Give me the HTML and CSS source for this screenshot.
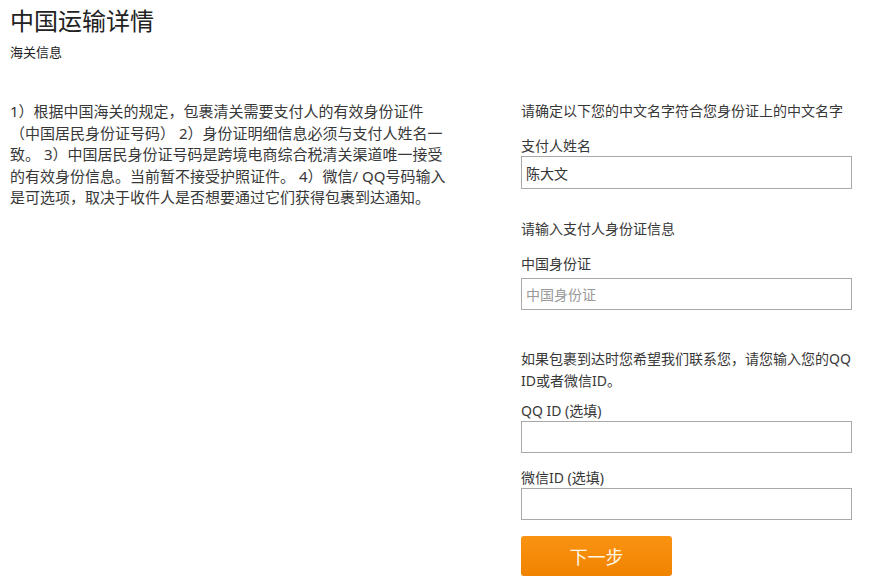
FILE: index.html
```html
<!DOCTYPE html>
<html lang="zh-CN">
<head>
<meta charset="utf-8">
<title>中国运输详情</title>
<link rel="stylesheet" href="styles.css">
</head>
<body>
<div class="page">
  <h1 class="title">中国运输详情</h1>
  <div class="subtitle">海关信息</div>
  <div class="main">
    <div class="left">
      <p class="info">1）根据中国海关的规定，包裹清关需要支付人的有效身份证件（中国居民身份证号码） 2）身份证明细信息必须与支付人姓名一致。 3）中国居民身份证号码是跨境电商综合税清关渠道唯一接受的有效身份信息。当前暂不接受护照证件。 4）微信/ QQ号码输入是可选项，取决于收件人是否想要通过它们获得包裹到达通知。</p>
    </div>
    <div class="right">
      <div class="note n1">请确定以下您的中文名字符合您身份证上的中文名字</div>
      <div class="label l1">支付人姓名</div>
      <input class="field f1" type="text" value="陈大文">
      <div class="note n2">请输入支付人身份证信息</div>
      <div class="label l2">中国身份证</div>
      <input class="field f2" type="text" placeholder="中国身份证">
      <div class="note n3">如果包裹到达时您希望我们联系您，请您输入您的QQ ID或者微信ID。</div>
      <div class="label l3">QQ ID (选填)</div>
      <input class="field f3" type="text">
      <div class="label l4">微信ID (选填)</div>
      <input class="field f4" type="text">
      <button class="next" type="button">下一步</button>
    </div>
  </div>
</div>
</body>
</html>
```
FILE: styles.css
```css
html, body {
  margin: 0;
  padding: 0;
  background: #fff;
}
body {
  font-family: "Noto Sans", "Noto Sans CJK SC", sans-serif;
  color: #333;
}
.page {
  padding: 0 10px;
}
.title {
  margin: 5px 0 0;
  font-size: 24px;
  line-height: 32px;
  font-weight: normal;
  color: #222;
}
.subtitle {
  margin-top: 5px;
  font-size: 13px;
  line-height: 20px;
  color: #222;
}
.main {
  display: flex;
  margin-top: 39px;
}
.left {
  width: 440px;
  flex: none;
}
.info {
  margin: 0;
  font-size: 15px;
  line-height: 21.5px;
  color: #383838;
}
.right {
  margin-left: 71px;
  width: 331px;
  display: flex;
  flex-direction: column;
  align-items: flex-start;
}
.note, .label {
  font-size: 14px;
  line-height: 20px;
  color: #383838;
  width: 100%;
}
.n1 { margin-bottom: 15px; }
.n2 { margin-top: 30px; margin-bottom: 15px; }
.l2 { margin-bottom: 4px; }
.n3 { margin-top: 38px; line-height: 22px; }
.l3 { margin-top: 9px; }
.l4 { margin-top: 15px; }
.field {
  box-sizing: border-box;
  width: 331px;
  height: 32px;
  margin: 0;
  padding: 0 4px;
  border: 1px solid #a9a9a9;
  border-radius: 0;
  font-family: "Noto Sans", "Noto Sans CJK SC", sans-serif;
  font-size: 14px;
  color: #333;
  background: #fff;
  outline: none;
}
.f1 { height: 33px; }
.field::placeholder {
  color: #999;
}
.next {
  margin-top: 16px;
  width: 151px;
  height: 40px;
  border: none;
  border-radius: 3px;
  background: linear-gradient(#fa9312, #f08300);
  color: #fff8e6;
  font-family: "Noto Sans", "Noto Sans CJK SC", sans-serif;
  font-size: 18px;
  cursor: pointer;
  padding: 0;
}
```
